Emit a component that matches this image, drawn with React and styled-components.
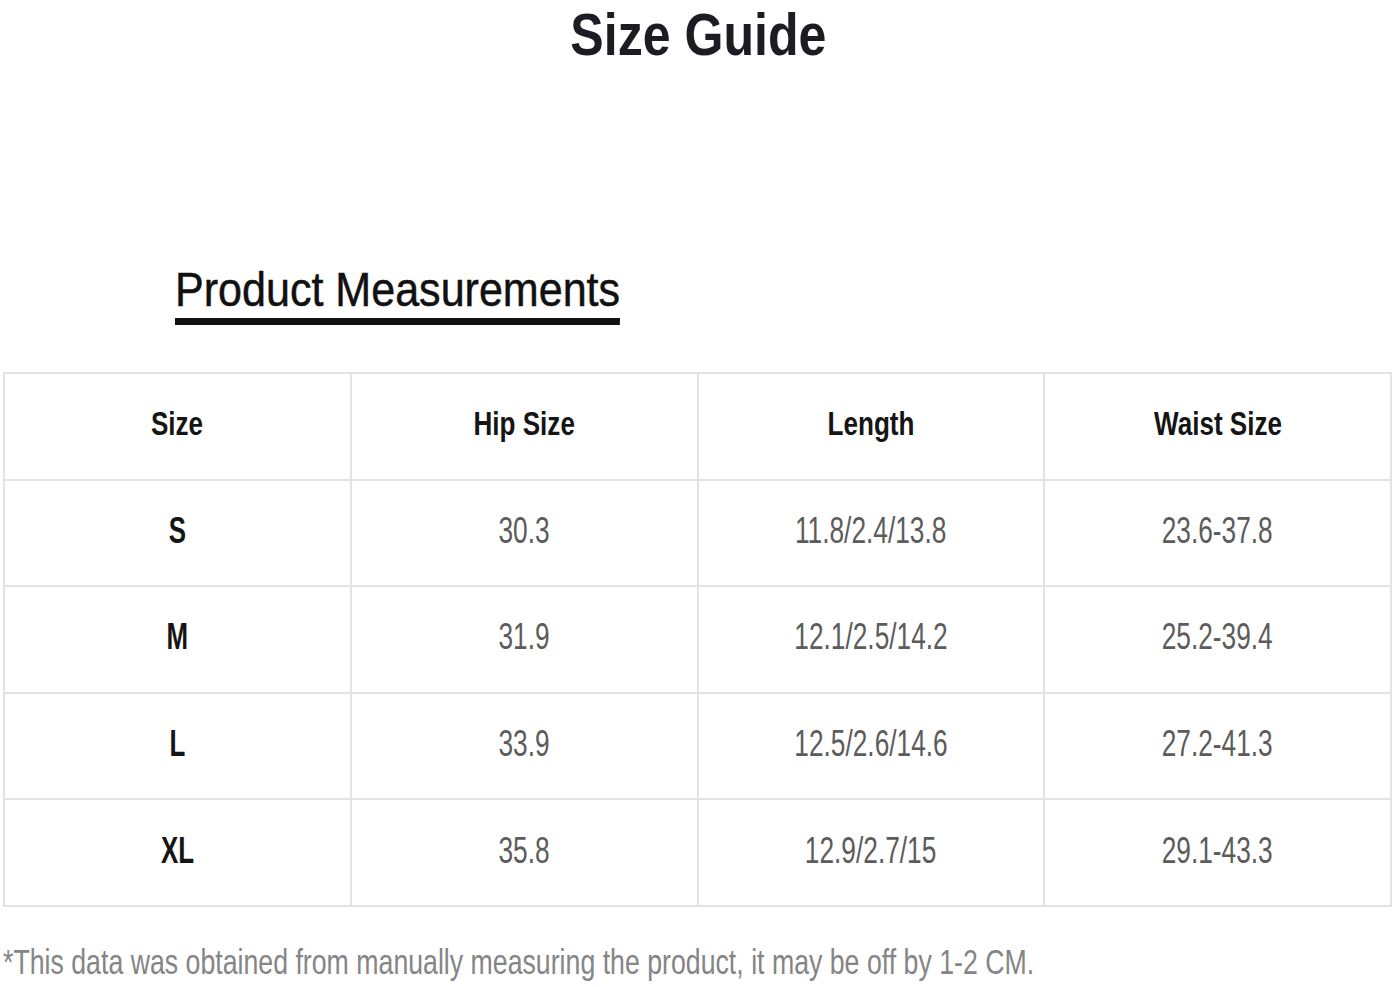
import React from "react";
import styled, { createGlobalStyle } from "styled-components";

const GlobalStyle = createGlobalStyle`
  html, body {
    margin: 0;
    padding: 0;
    background: #ffffff;
  }
  body {
    font-family: "Liberation Sans", Arial, sans-serif;
  }
`;

// 페이지 전체
const Page = styled.div`
  width: 1396px;
  min-height: 987px;
  padding: 0 0 0 3px;
  box-sizing: border-box;
  display: flex;
  flex-direction: column;
`;

// 상단 제목
const Title = styled.h1`
  margin: 0;
  font-size: 60px;
  line-height: 70px;
  font-weight: 700;
  color: #1c1c22;
  text-align: center;
  width: 1390px;
`;

// 가로로 눌린 글자
const Squeeze = styled.span`
  display: inline-block;
  white-space: nowrap;
  transform: scaleX(${(p) => p.$sx});
  transform-origin: ${(p) => p.$origin || "center"};
`;

const SectionWrap = styled.div`
  margin-top: 192px;
  padding-left: 172px;
`;

// 소제목 + 밑줄
const SectionTitle = styled.h2`
  margin: 0;
  display: inline-block;
  font-size: 48px;
  line-height: 56px;
  font-weight: 400;
  color: #111;
  -webkit-text-stroke: 0.5px #111;
  border-bottom: 7px solid #111;
  white-space: nowrap;
  transform: scaleX(0.897);
  transform-origin: left;
`;

// 표
const Table = styled.div`
  margin-top: 47px;
  width: 1389px;
  display: grid;
  grid-template-columns: repeat(4, 1fr);
  border-top: 2px solid #e3e3e3;
  border-left: 2px solid #e3e3e3;
  box-sizing: border-box;
`;

const Cell = styled.div`
  height: 106.6px;
  box-sizing: border-box;
  border-right: 2px solid #e3e3e3;
  border-bottom: 2px solid #e3e3e3;
  display: flex;
  align-items: center;
  justify-content: center;
  padding-bottom: 4px;
  font-size: ${(p) => (p.$head ? "33px" : "37px")};
  font-weight: ${(p) => (p.$bold ? 700 : 400)};
  color: ${(p) => (p.$bold ? "#151515" : "#5c5c5c")};
`;

// 하단 안내문
const Note = styled.p`
  margin: 35px 0 0;
  font-size: 35px;
  line-height: 40px;
  color: #858585;
  white-space: nowrap;
`;

const headers = ["Size", "Hip Size", "Length", "Waist Size"];

const rows = [
  ["S", "30.3", "11.8/2.4/13.8", "23.6-37.8"],
  ["M", "31.9", "12.1/2.5/14.2", "25.2-39.4"],
  ["L", "33.9", "12.5/2.6/14.6", "27.2-41.3"],
  ["XL", "35.8", "12.9/2.7/15", "29.1-43.3"],
];

const App = () => {
  return (
    <>
      <GlobalStyle />
      <Page>
        <Title>
          <Squeeze $sx={0.835}>Size Guide</Squeeze>
        </Title>

        <SectionWrap>
          <SectionTitle>Product Measurements</SectionTitle>
        </SectionWrap>

        <Table>
          {headers.map((h) => (
            <Cell key={h} $head $bold>
              <Squeeze $sx={0.79}>{h}</Squeeze>
            </Cell>
          ))}
          {rows.map((row) =>
            row.map((value, i) => (
              <Cell key={row[0] + i} $bold={i === 0}>
                <Squeeze $sx={i === 0 ? 0.7 : 0.71}>{value}</Squeeze>
              </Cell>
            ))
          )}
        </Table>

        <Note>
          <Squeeze $sx={0.763} $origin="left">
            *This data was obtained from manually measuring the product, it may be off by 1-2 CM.
          </Squeeze>
        </Note>
      </Page>
    </>
  );
};

export default App;
